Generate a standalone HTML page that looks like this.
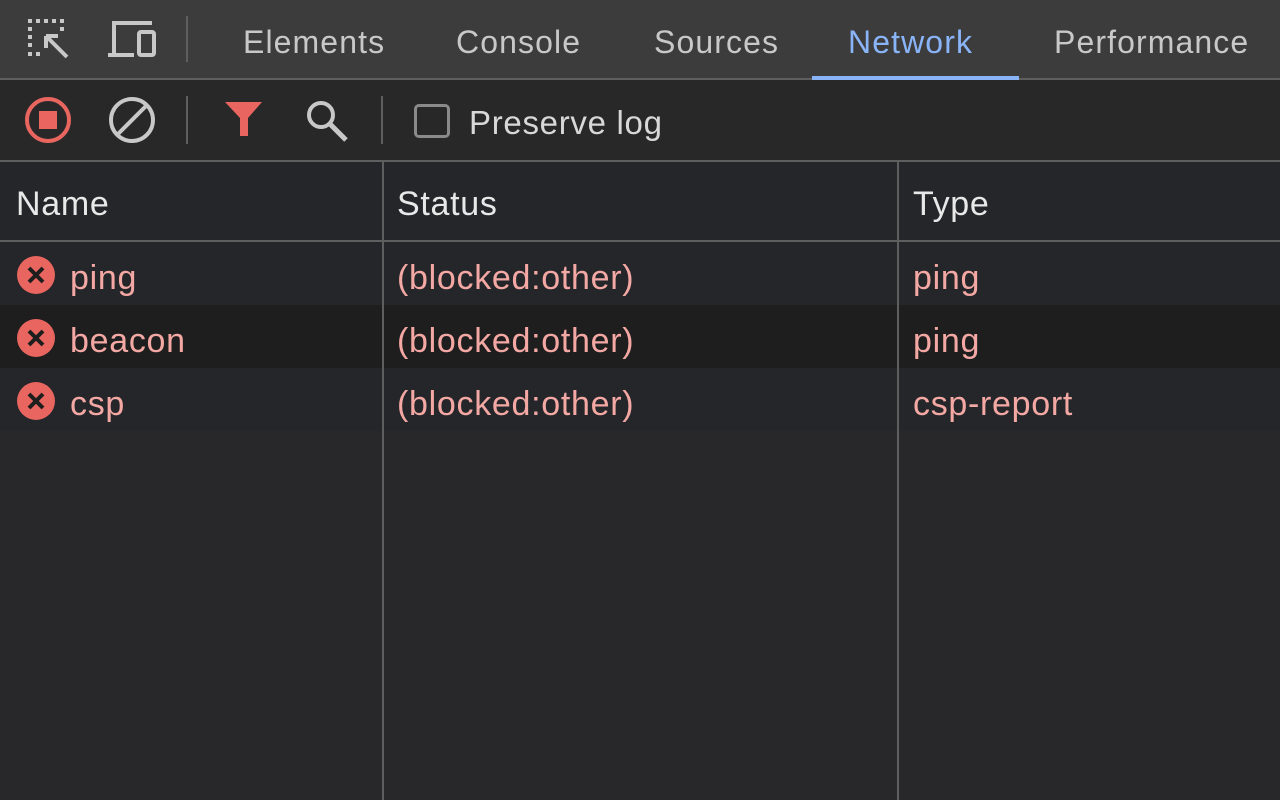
<!DOCTYPE html>
<html><head><style>
*{margin:0;padding:0;box-sizing:border-box}
body{width:1280px;height:800px;background:#28282b;font-family:"Liberation Sans",sans-serif;overflow:hidden;position:relative}
.a{position:absolute}
.tab{position:absolute;top:22px;font-size:32px;color:#c8c8c8;line-height:40px;letter-spacing:1.1px}
.t{position:absolute;font-size:34px;line-height:40px;letter-spacing:0.7px}
.p{color:#f4a8a4}
</style></head><body>
<div class="a" style="left:0;top:0;width:1280px;height:78px;background:#3c3c3c"></div>
<div class="a" style="left:0;top:78px;width:1280px;height:2px;background:#5e5e5e"></div>
<div class="a" style="left:0;top:80px;width:1280px;height:80px;background:#282828"></div>
<div class="a" style="left:0;top:160px;width:1280px;height:2px;background:#5e5e5e"></div>
<div class="a" style="left:0;top:162px;width:1280px;height:78px;background:#25262a"></div>
<div class="a" style="left:0;top:240px;width:1280px;height:2px;background:#5e5e5e"></div>
<div class="a" style="left:0;top:242px;width:1280px;height:63px;background:#25262a"></div>
<div class="a" style="left:0;top:305px;width:1280px;height:63px;background:#1e1e1e"></div>
<div class="a" style="left:0;top:368px;width:1280px;height:63px;background:#25262a"></div>
<div class="a" style="left:382px;top:162px;width:2px;height:638px;background:#5e5e5e"></div>
<div class="a" style="left:897px;top:162px;width:2px;height:638px;background:#5e5e5e"></div>
<svg class="a" style="left:24px;top:16px" width="50" height="46" viewBox="0 0 50 46">
<g fill="#c8c8c8"><rect x="4" y="3" width="4" height="4"/><rect x="12" y="3" width="4" height="4"/><rect x="20" y="3" width="4" height="4"/><rect x="28" y="3" width="4" height="4"/><rect x="36" y="3" width="4" height="4"/><rect x="4" y="11" width="4" height="4"/><rect x="4" y="19" width="4" height="4"/><rect x="4" y="27" width="4" height="4"/><rect x="4" y="36" width="4" height="4"/><rect x="12" y="36" width="4" height="4"/><rect x="36" y="11" width="4" height="4"/></g>
<path d="M22 20 L43 41 M22 20 H34 M22 20 V32" stroke="#c8c8c8" stroke-width="4" fill="none"/></svg>
<svg class="a" style="left:106px;top:18px" width="54" height="42" viewBox="0 0 54 42">
<path d="M8 36 V5 H46 M2 37 H28" stroke="#c8c8c8" stroke-width="4" fill="none"/>
<rect x="33" y="14" width="15" height="23" rx="2" stroke="#c8c8c8" stroke-width="4" fill="none"/></svg>
<div class="a" style="left:186px;top:16px;width:2px;height:46px;background:#5e5e5e"></div>
<div class="tab" style="left:243px">Elements</div>
<div class="tab" style="left:456px">Console</div>
<div class="tab" style="left:654px">Sources</div>
<div class="tab" style="left:848px;color:#8ab4f8">Network</div>
<div class="tab" style="left:1054px">Performance</div>
<div class="a" style="left:812px;top:76px;width:207px;height:4px;background:#8ab4f8"></div>
<svg class="a" style="left:24px;top:96px" width="50" height="50"><circle cx="24" cy="24" r="21" stroke="#e8665f" stroke-width="4" fill="none"/><rect x="15" y="15" width="18" height="18" fill="#e8665f"/></svg>
<svg class="a" style="left:108px;top:96px" width="50" height="50"><circle cx="24" cy="24" r="21" stroke="#c8c8c8" stroke-width="4" fill="none"/><path d="M9 39 L39 9" stroke="#c8c8c8" stroke-width="4"/></svg>
<div class="a" style="left:186px;top:96px;width:2px;height:48px;background:#5e5e5e"></div>
<svg class="a" style="left:224px;top:100px" width="40" height="40"><path d="M1 2 H38 L24 18 V36 H16 V18 Z" fill="#e8665f"/></svg>
<svg class="a" style="left:304px;top:98px" width="48" height="46"><circle cx="17" cy="17" r="12" stroke="#c8c8c8" stroke-width="4" fill="none"/><path d="M26 26 L42 42" stroke="#c8c8c8" stroke-width="5"/></svg>
<div class="a" style="left:381px;top:96px;width:2px;height:48px;background:#5e5e5e"></div>
<div class="a" style="left:414px;top:104px;width:36px;height:34px;border:3px solid #8a8a8a;border-radius:5px"></div>
<div class="t" style="left:469px;top:103px;color:#d8d8d8;font-size:33px">Preserve log</div>
<div class="t" style="left:16px;top:184px;color:#e8e8e8">Name</div>
<div class="t" style="left:397px;top:184px;color:#e8e8e8">Status</div>
<div class="t" style="left:913px;top:184px;color:#e8e8e8">Type</div>
<svg class="a" style="left:17px;top:256px" width="38" height="38"><circle cx="19" cy="19" r="19" fill="#e8665f"/><path d="M12 12 L26 26 M26 12 L12 26" stroke="#1e1e1e" stroke-width="4"/></svg>
<div class="t p" style="left:70px;top:258px">ping</div>
<div class="t p" style="left:397px;top:258px">(blocked:other)</div>
<div class="t p" style="left:913px;top:258px">ping</div>
<svg class="a" style="left:17px;top:319px" width="38" height="38"><circle cx="19" cy="19" r="19" fill="#e8665f"/><path d="M12 12 L26 26 M26 12 L12 26" stroke="#1e1e1e" stroke-width="4"/></svg>
<div class="t p" style="left:70px;top:321px">beacon</div>
<div class="t p" style="left:397px;top:321px">(blocked:other)</div>
<div class="t p" style="left:913px;top:321px">ping</div>
<svg class="a" style="left:17px;top:382px" width="38" height="38"><circle cx="19" cy="19" r="19" fill="#e8665f"/><path d="M12 12 L26 26 M26 12 L12 26" stroke="#1e1e1e" stroke-width="4"/></svg>
<div class="t p" style="left:70px;top:384px">csp</div>
<div class="t p" style="left:397px;top:384px">(blocked:other)</div>
<div class="t p" style="left:913px;top:384px">csp-report</div>
</body></html>
